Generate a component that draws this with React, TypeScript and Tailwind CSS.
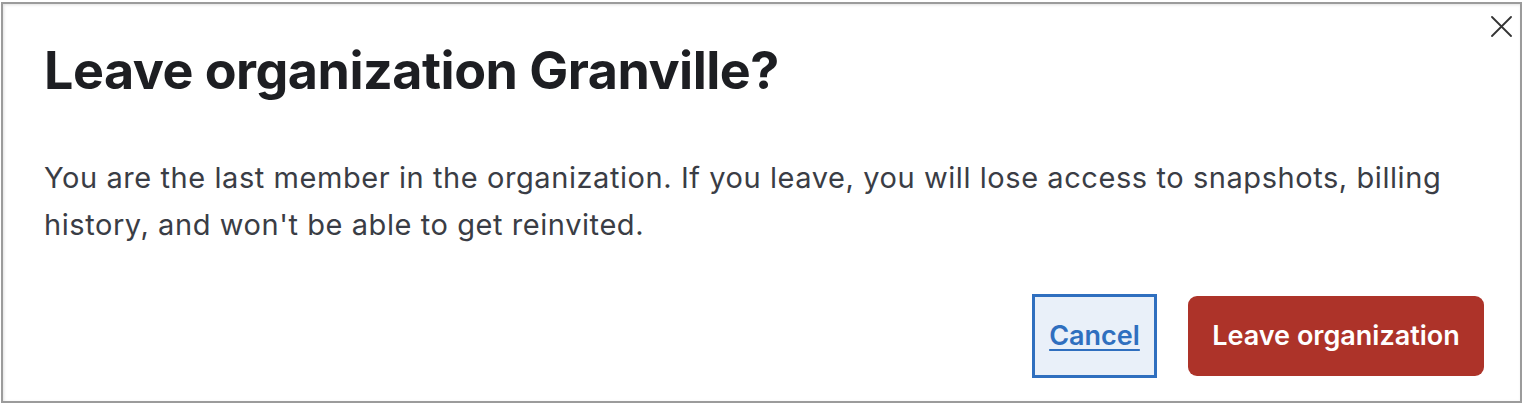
export default function App() {
  return (
    <div className="w-[1528px] h-[406px] bg-white pl-px pt-[2px] font-['Inter',sans-serif]">
      <div className="relative w-[1521px] h-[401px] border-2 border-[#9b9b9b] shadow-[inset_1px_1px_3px_rgba(0,0,0,0.12)] bg-white">
        {/* Close */}
        <button aria-label="Close" className="absolute right-[8px] top-[12px] text-[#333]">
          <svg width="21" height="21" viewBox="0 0 21 21" fill="none" stroke="currentColor" strokeWidth="1.8" strokeLinecap="round">
            <path d="M1 1L20 20M20 1L1 20" />
          </svg>
        </button>

        <div className="pl-[41px] pr-[40px] pt-[34px]">
          <h2 className="text-[52px] leading-[66px] font-bold text-[#1d1e22] tracking-[-0.5px]">
            Leave organization Granville?
          </h2>
          <p className="mt-[50px] text-[29px] leading-[47px] text-[#3a3d45] tracking-[0.57px] max-w-[1436px]">
            You are the last member in the organization. If you leave, you will lose access to snapshots, billing
            history, and won't be able to get reinvited.
          </p>

          <div className="mt-[46px] -mr-[4px] flex justify-end items-center gap-[31px]">
            <button className="h-[84px] w-[125px] border-[3px] border-[#2f6fbf] bg-[#e9f0f9] text-[27px] font-semibold text-[#2f6fbf] underline underline-offset-[4px]">
              Cancel
            </button>
            <button className="h-[80px] w-[296px] rounded-[9px] bg-[#ad3329] text-[27px] font-semibold text-white">
              Leave organization
            </button>
          </div>
        </div>
      </div>
    </div>
  )
}
